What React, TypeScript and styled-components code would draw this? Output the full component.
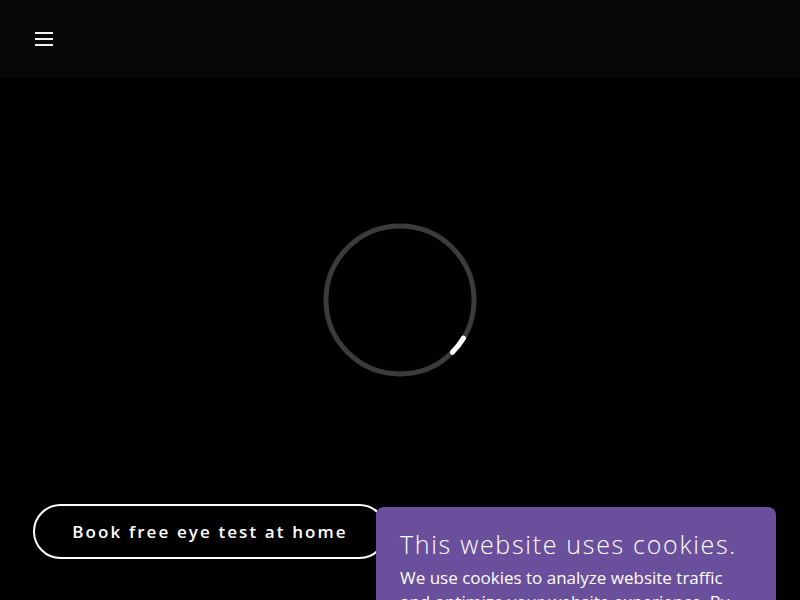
import React from 'react';
import styled, { createGlobalStyle } from 'styled-components';

const GlobalStyle = createGlobalStyle`
  html, body {
    margin: 0;
    padding: 0;
    background: #000;
    font-family: 'Open Sans', 'Liberation Sans', sans-serif;
    overflow: hidden;
  }
`;

const App = () => {
  return (
    <>
      <GlobalStyle />
      <Page>
        <Header>
          <MenuButton aria-label="Menu">
            <span />
            <span />
            <span />
          </MenuButton>
        </Header>
        <Hero>
          <BookButton>Book free eye test at home</BookButton>
        </Hero>
      </Page>

      <Loader>
        <svg width="160" height="160" viewBox="0 0 160 160">
          <circle cx="80" cy="80" r="74" fill="none" stroke="#3b3b3b" strokeWidth="5" />
          <circle
            cx="80"
            cy="80"
            r="74"
            fill="none"
            stroke="#ffffff"
            strokeWidth="5"
            strokeLinecap="round"
            strokeDasharray="18 500"
            transform="rotate(31 80 80)"
          />
        </svg>
      </Loader>

      <CookieBox>
        <CookieTitle>This website uses cookies.</CookieTitle>
        <CookieText>
          We use cookies to analyze website traffic and optimize your website experience. By
          accepting our use of cookies, your data will be aggregated with all other user data.
        </CookieText>
      </CookieBox>
    </>
  );
};

export default App;

const Page = styled.div`
  display: flex;
  flex-direction: column;
  height: 100vh;
`;

const Header = styled.header`
  height: 78px;
  background-color: #070707;
  display: flex;
  align-items: center;
  padding: 0 35px;
  flex-shrink: 0;
`;

const MenuButton = styled.button`
  display: flex;
  flex-direction: column;
  gap: 4.7px;
  width: 18px;
  padding: 0;
  background: none;
  border: none;
  cursor: pointer;

  span {
    display: block;
    height: 1.6px;
    width: 18px;
    background-color: #f2f2f2;
  }
`;

const Hero = styled.main`
  flex: 1;
  display: flex;
  flex-direction: column;
  justify-content: flex-end;
  align-items: flex-start;
  padding: 0 0 41px 33px;
`;

const BookButton = styled.a`
  display: flex;
  align-items: center;
  justify-content: center;
  box-sizing: border-box;
  width: 354px;
  height: 55px;
  border: 2px solid #fff;
  border-radius: 28px;
  color: #fff;
  font-family: 'Open Sans', sans-serif;
  font-weight: 600;
  font-size: 17px;
  letter-spacing: 2.1px;
  cursor: pointer;
`;

const Loader = styled.div`
  position: fixed;
  left: 320px;
  top: 220px;
  width: 160px;
  height: 160px;

  svg {
    display: block;
  }
`;

const CookieBox = styled.div`
  position: fixed;
  left: 376px;
  top: 507px;
  width: 400px;
  box-sizing: border-box;
  padding: 18px 24px 24px;
  background-color: #6a4f9c;
  border-radius: 8px;
  color: #fff;
`;

const CookieTitle = styled.h2`
  margin: 0 0 3px;
  font-family: 'Open Sans', sans-serif;
  font-weight: 300;
  font-size: 25px;
  letter-spacing: 1.7px;
  line-height: 38px;
`;

const CookieText = styled.p`
  margin: 0;
  font-family: 'Open Sans', sans-serif;
  font-weight: 400;
  font-size: 17px;
  line-height: 24px;
`;
